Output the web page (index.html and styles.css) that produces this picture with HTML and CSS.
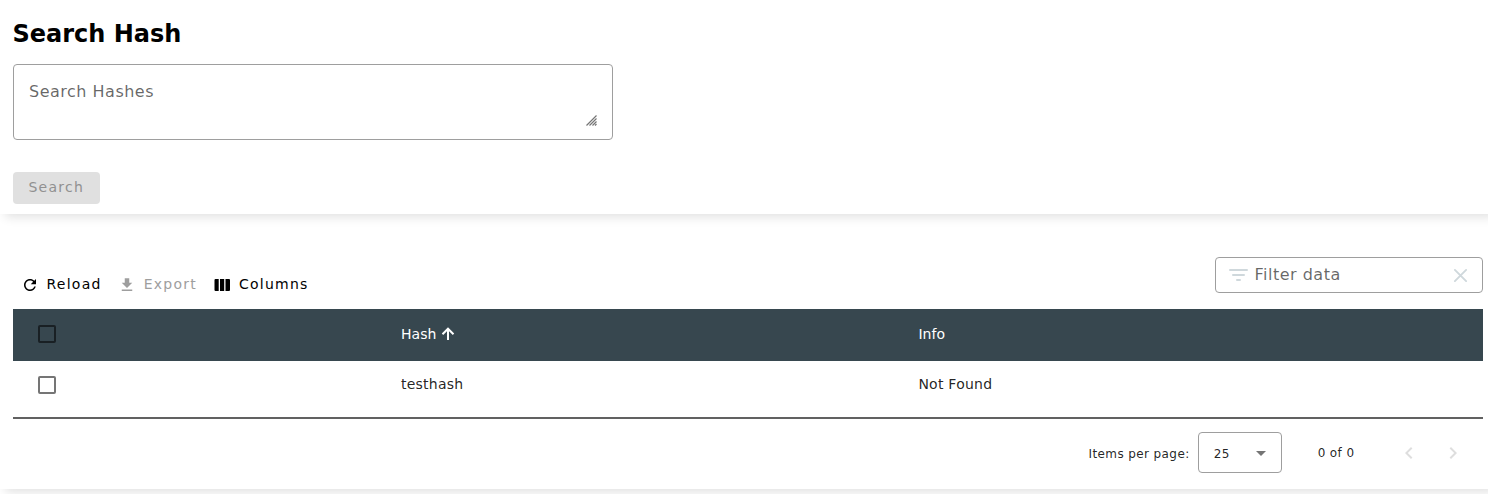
FILE: index.html
```html
<!DOCTYPE html>
<html lang="en">
<head>
<meta charset="utf-8">
<title>Search Hash</title>
<link rel="stylesheet" href="styles.css">
</head>
<body>
<section class="card search-card">
  <h1 class="title">Search Hash</h1>
  <div class="search-field">
    <textarea class="search-input" placeholder="Search Hashes"></textarea>
    <svg class="grip" width="11" height="11" viewBox="0 0 11 11"><path d="M.5 10.5l10-10M3.5 10.5l7-7M6.5 10.5l4-4M9 10.5L10.5 9"/></svg>
  </div>
  <button class="search-button" disabled>Search</button>
</section>
<section class="card table-card">
  <div class="toolbar">
    <div class="actions">
      <button class="action reload"><svg width="18" height="18" viewBox="0 0 24 24"><path d="M17.65 6.35C16.2 4.9 14.21 4 12 4c-4.42 0-7.99 3.58-7.99 8s3.57 8 7.99 8c3.73 0 6.84-2.55 7.73-6h-2.08c-.82 2.33-3.04 4-5.65 4-3.31 0-6-2.69-6-6s2.69-6 6-6c1.66 0 3.14.69 4.22 1.78L13 11h7V4l-2.35 2.35z"/></svg>Reload</button>
      <button class="action export" disabled><svg width="18" height="18" viewBox="0 0 24 24"><path d="M19 9h-4V3H9v6H5l7 7 7-7zM5 18v2h14v-2H5z"/></svg>Export</button>
      <button class="action columns"><svg width="16" height="14" viewBox="0 0 16 14"><path d="M.5 2q0-1 1-1h3.2v12H1.500q-1 0-1-1zM6 1h4.200v12H6zM11.500 1H15q1 0 1 1v10q0 1-1 1h-3.500z"/></svg>Columns</button>
    </div>
    <div class="filter">
      <svg width="19" height="14" viewBox="0 0 19 14"><path d="M1 2h17M4 7h11M8 12h3"/></svg>
      <input class="filter-input" placeholder="Filter data">
      <svg class="clear" width="15" height="15" viewBox="0 0 16 16"><path d="M2 2l12 12M14 2L2 14"/></svg>
    </div>
  </div>
  <div class="row head">
    <span class="check"></span>
    <span class="sorted">Hash<svg width="14" height="14" viewBox="0 0 14 14"><path d="M7 13V2M1.500 7.200L7 1.700l5.500 5.500"/></svg></span>
    <span>Info</span>
  </div>
  <div class="row body">
    <span class="check"></span>
    <span class="cell">testhash</span>
    <span class="cell">Not Found</span>
  </div>
  <div class="paginator">
    <span class="page-label">Items per page:</span>
    <div class="page-size">25<svg width="10" height="5" viewBox="0 0 10 5"><path d="M0 0h10L5 5z"/></svg></div>
    <span class="range">0 of 0</span>
    <svg class="arrow" width="24" height="24" viewBox="0 0 24 24"><path d="M15.410 7.410L14 6l-6 6 6 6 1.410-1.410L10.830 12z"/></svg>
    <svg class="arrow" width="24" height="24" viewBox="0 0 24 24"><path d="M10 6L8.590 7.410 13.170 12l-4.580 4.590L10 18l6-6z"/></svg>
  </div>
</section>
</body>
</html>
```
FILE: styles.css
```css
* { box-sizing: border-box; }
body {
  margin: 0;
  height: 494px;
  overflow: hidden;
  background: #fff;
  color: rgba(0, 0, 0, .87);
  font-family: "DejaVu Sans", sans-serif;
}
button, input, textarea { font-family: inherit; }
.card {
  width: 1500px;
  padding-left: 12.5px;
  box-shadow: 0 8px 10px -5px rgba(0, 0, 0, .12);
}
.search-card { height: 214px; padding-top: 18px; }
.title { margin: 0; font-size: 24px; line-height: 32px; color: #000; }
.search-field {
  position: relative;
  width: 600px;
  height: 76px;
  margin-top: 14px;
  padding: 17px 14.5px 11px 15.5px;
  border: 1px solid #9e9e9e;
  border-radius: 4px;
}
.search-input {
  display: block;
  width: 568px;
  height: 46px;
  padding: 0;
  border: 0;
  outline: 0;
  background: transparent;
  font-size: 16px;
  line-height: 20px;
  letter-spacing: .5px;
  resize: none;
}
.grip {
  position: absolute;
  right: 15px;
  bottom: 13px;
  fill: none;
  stroke: #757575;
  stroke-width: 1.2;
}
.search-input::placeholder, .filter-input::placeholder { color: rgba(0, 0, 0, .6); }
.search-button {
  display: block;
  width: 87px;
  height: 32px;
  margin-top: 32px;
  padding: 0 0 2px .6px;
  border: 0;
  border-radius: 4px;
  background: #e0e0e0;
  color: #919191;
  font-size: 14px;
  letter-spacing: 1.25px;
}
.table-card { height: 275px; padding-top: 43px; }
.toolbar { display: flex; justify-content: space-between; width: 1470px; height: 52px; }
.actions { display: flex; padding: 18px 0 0 8px; height: 36px; }
.action {
  display: flex;
  align-items: center;
  height: 18px;
  padding: 0;
  border: 0;
  background: none;
  color: #000;
  font-size: 14px;
  letter-spacing: 1.25px;
}
.action svg { fill: currentColor; position: relative; top: 1px; }
.reload { gap: 8px; }
.export { gap: 8px; margin-left: 16px; color: #9e9e9e; }
.columns { gap: 9px; margin-left: 17px; }
.filter {
  display: flex;
  align-items: center;
  width: 268px;
  height: 36px;
  padding: 0 14px 0 13px;
  border: 1px solid #9e9e9e;
  border-radius: 4px;
}
.filter svg { fill: none; stroke: #cfd8dc; stroke-width: 2; stroke-linecap: round; }
.filter-input {
  flex: 1;
  min-width: 0;
  height: 24px;
  margin: 0 0 2px 7px;
  padding: 0;
  border: 0;
  outline: 0;
  background: transparent;
  font-size: 16px;
  letter-spacing: .5px;
}
.row {
  display: grid;
  grid-template-columns: 388.4px 517.5px 1fr;
  align-items: center;
  width: 1470px;
  font-size: 14px;
  letter-spacing: .25px;
}
.head { height: 52px; padding-bottom: 2px; background: #37474f; color: #fff; letter-spacing: .1px; }
.body { height: 58px; padding-bottom: 9px; border-bottom: 2px solid #616161; }
.cell { padding-bottom: 2px; }
.check {
  width: 18px;
  height: 18px;
  margin-left: 25px;
  border: 2px solid #757575;
  border-radius: 2px;
}
.head .check { border-color: #192024; }
.sorted { display: flex; align-items: center; gap: 4.5px; }
.sorted svg { fill: none; stroke: #fff; stroke-width: 2; }
.paginator {
  display: flex;
  align-items: center;
  justify-content: flex-end;
  width: 1470px;
  height: 67px;
  padding-right: 18px;
  font-size: 12px;
  letter-spacing: .4px;
}
.page-label { padding-top: 2px; }
.page-size {
  display: flex;
  align-items: center;
  justify-content: space-between;
  width: 84px;
  height: 41px;
  margin: 0 36px 0 8px;
  padding: 2px 15px 0;
  border: 1px solid #9e9e9e;
  border-radius: 4px;
}
.page-size svg { fill: #757575; }
.range { margin-right: 42px; }
.arrow { fill: #dedede; }
.arrow + .arrow { margin-left: 20px; }
```
